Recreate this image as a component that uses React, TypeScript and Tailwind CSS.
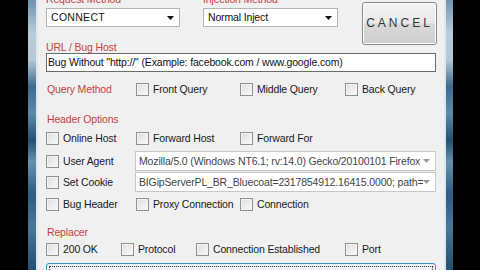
import React from "react";

const Check = ({ label }: { label: string }) => (
  <div className="flex items-center gap-[4px] whitespace-nowrap">
    <span className="w-[13px] h-[13px] border border-[#8f8f8f] bg-[linear-gradient(135deg,#dcdcdc,#fbfbfb)] shadow-[inset_0_0_0_1px_#f4f4f4] shrink-0" />
    <span className="text-[#1a1a1a]">{label}</span>
  </div>
);

const Caret = ({ light }: { light?: boolean }) => (
  <svg width="7" height="4" viewBox="0 0 7 4" className="shrink-0">
    <path d="M0 0H7L3.5 4Z" fill={light ? "#9a9a9a" : "#111"} />
  </svg>
);

const Label = ({ children }: { children: React.ReactNode }) => (
  <div className="text-[#c43f40] whitespace-nowrap">{children}</div>
);

const frame =
  "shrink-0 bg-[linear-gradient(to_bottom,#6f93ad_0%,#b9ccd9_12%,#b7c9d6_22%,#3e6b8c_32%,#5f8aaa_42%,#23506f_52%,#6891ad_60%,#2c5c80_72%,#4b7797_84%,#244f70_100%)]";

export default function App() {
  return (
    <div
      className="w-[480px] h-[270px] overflow-hidden bg-black flex text-[10.5px] tracking-[-0.15px] leading-[13px]"
      style={{ fontFamily: '"Liberation Sans", Arial, sans-serif' }}
    >
      <div className="w-[28px] shrink-0 bg-black" />
      <div className={`w-[8px] ${frame}`} />
      <div className="w-[2px] shrink-0 bg-[#dfe7ee]" />
      <div className="flex-1 bg-[#f0f0f0] pl-[8px] pr-[7px] flex flex-col [&>*]:shrink-0">
        <div className="-mt-[7px] flex items-start h-[52px]">
          <div className="flex flex-col w-[157px]">
            <Label>Request Method</Label>
            <div className="mt-[2px] w-[134px] h-[19px] bg-white border border-[#b4b4b4] flex items-center justify-between pl-[4px] pr-[5px] text-[#111] tracking-[0.3px]">
              <span>CONNECT</span>
              <Caret />
            </div>
          </div>
          <div className="flex flex-col w-[159px]">
            <Label>Injection Method</Label>
            <div className="mt-[2px] w-[135px] h-[19px] bg-white border border-[#b4b4b4] flex items-center justify-between pl-[4px] pr-[5px] text-[#111]">
              <span>Normal Inject</span>
              <Caret />
            </div>
          </div>
          <div className="mt-[9px] w-[75px] h-[43px] rounded-[3px] border border-[#8a8a8a] bg-[linear-gradient(to_bottom,#f4f4f4_0%,#e9e9e9_48%,#d8d8d8_52%,#cfcfcf_100%)] flex items-center justify-center text-[12px] tracking-[3px] text-[#333] shadow-[inset_0_0_0_1px_#fbfbfb]">
            CANCEL
          </div>
        </div>
        <div className="-mt-[4px] h-[13px]">
          <Label>URL / Bug Host</Label>
        </div>
        <div className="-mt-[1px] w-[390px] h-[19px] bg-white border border-[#6a6a6a] flex items-center pl-[1px] text-[#111] whitespace-nowrap overflow-hidden">
          Bug Without "http://" (Example: facebook.com / www.google.com)
        </div>
        <div className="mt-[11px] flex items-center h-[13px]">
          <div className="w-[90px] pl-[1px]">
            <Label>Query Method</Label>
          </div>
          <div className="w-[104px]"><Check label="Front Query" /></div>
          <div className="w-[105px]"><Check label="Middle Query" /></div>
          <Check label="Back Query" />
        </div>
        <div className="mt-[17px] h-[13px] pl-[1px]">
          <Label>Header Options</Label>
        </div>
        <div className="mt-[6px] flex items-center h-[13px]">
          <div className="w-[90px]"><Check label="Online Host" /></div>
          <div className="w-[104px]"><Check label="Forward Host" /></div>
          <Check label="Forward For" />
        </div>
        <div className="mt-[6px] flex items-center h-[20px]">
          <div className="w-[89px]"><Check label="User Agent" /></div>
          <div className="w-[301px] h-[20px] bg-white border border-[#c6c6c6] flex items-center justify-between pl-[3px] pr-[5px] text-[#444] whitespace-nowrap overflow-hidden">
            <span className="overflow-hidden">Mozilla/5.0 (Windows NT6.1; rv:14.0) Gecko/20100101 Firefox</span>
            <Caret light />
          </div>
        </div>
        <div className="mt-[1px] flex items-center h-[20px]">
          <div className="w-[89px]"><Check label="Set Cookie" /></div>
          <div className="w-[301px] h-[20px] bg-white border border-[#c6c6c6] flex items-center justify-between pl-[3px] pr-[5px] text-[#444] whitespace-nowrap overflow-hidden">
            <span className="overflow-hidden">BIGipServerPL_BR_Bluecoat=2317854912.16415.0000; path=</span>
            <Caret light />
          </div>
        </div>
        <div className="mt-[6px] flex items-center h-[13px]">
          <div className="w-[90px]"><Check label="Bug Header" /></div>
          <div className="w-[104px]"><Check label="Proxy Connection" /></div>
          <Check label="Connection" />
        </div>
        <div className="mt-[15px] h-[13px] pl-[1px]">
          <Label>Replacer</Label>
        </div>
        <div className="mt-[4px] flex items-center h-[13px]">
          <div className="w-[75px]"><Check label="200 OK" /></div>
          <div className="w-[75px]"><Check label="Protocol" /></div>
          <div className="w-[149px]"><Check label="Connection Established" /></div>
          <Check label="Port" />
        </div>
        <div className="mt-[7px] w-[390px] h-[20px] rounded-[3px] border border-[#3c8fc1] bg-[#eef6fb] p-[2px]">
          <div className="w-full h-full border border-dotted border-[#333] rounded-[1px]" />
        </div>
      </div>
      <div className="w-[2px] shrink-0 bg-[#dfe7ee]" />
      <div className={`w-[7px] ${frame}`} />
      <div className="flex-1 bg-black" />
    </div>
  );
}
